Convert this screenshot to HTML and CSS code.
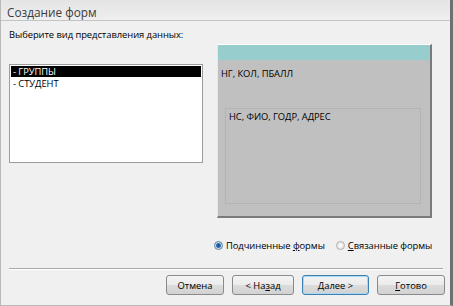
FILE: index.html
```html
<!DOCTYPE html>
<html lang="ru">
<head>
  <meta charset="UTF-8" />
  <title>Создание форм</title>
  <link rel="stylesheet" href="styles.css">
</head>
<body>
  <div class="window">
    <div class="titlebar">Создание форм</div>

    <div class="content">
      <div class="prompt">Выберите вид представления данных:</div>

      <div class="main">
        <ul class="listbox">
          <li class="selected">- ГРУППЫ</li>
          <li>- СТУДЕНТ</li>
        </ul>

        <div class="preview">
          <div class="preview-head"></div>
          <div class="preview-fields">НГ, КОЛ, ПБАЛЛ</div>
          <div class="subform">НС, ФИО, ГОДР, АДРЕС</div>
        </div>
      </div>

      <div class="options">
        <label class="radio"><span class="dot checked"></span><span>Подчиненные <u>ф</u>ормы</span></label>
        <label class="radio"><span class="dot"></span><span><u>С</u>вязанные формы</span></label>
      </div>
    </div>

    <div class="separator"></div>

    <div class="buttons">
      <button class="btn w-cancel">Отмена</button>
      <button class="btn w-back">&lt; На<u>з</u>ад</button>
      <button class="btn w-next default"><u>Д</u>алее &gt;</button>
      <button class="btn w-done"><u>Г</u>отово</button>
    </div>
  </div>
</body>
</html>
```

FILE: styles.css
```css
:root {
  --face: #f0f0f0;
  --text: #000000;
  --ui-font: "Open Sans", "DejaVu Sans", sans-serif;
}

body {
  margin: 0;
  background: #ffffff;
  font-family: var(--ui-font);
  color: var(--text);
}

.window {
  width: 453px;
  height: 306px;
  box-sizing: border-box;
  background: var(--face);
  border-left: 1px solid #b9b9b9;
  border-right: 3px solid #6f6f6f;
  border-bottom: 1px solid #b9b9b9;
  display: flex;
  flex-direction: column;
}

.titlebar {
  height: 21px;
  box-sizing: border-box;
  padding-left: 6px;
  line-height: 24px;
  font-size: 11.8px;
  color: #3c3c3c;
  background: linear-gradient(#e4e4e4, #efefef);
  border-bottom: 1px solid #c4c4c4;
}

.content {
  padding: 7px 0 0 8px;
  flex: 1;
  font-size: 9.4px;
  letter-spacing: -0.05px;
}

.prompt {
  line-height: 14px;
}

.main {
  display: flex;
  align-items: flex-start;
  gap: 14px;
  margin-top: 2px;
}

.listbox {
  list-style: none;
  margin: 20px 0 0 0;
  padding: 1px;
  width: 194px;
  height: 99px;
  box-sizing: border-box;
  background: #ffffff;
  border: 1px solid #9c9c9c;
}

.listbox li {
  line-height: 13px;
  padding-left: 2px;
}

.listbox .selected {
  background: #000000;
  color: #ffffff;
  line-height: 11px;
}

.preview {
  width: 215px;
  height: 174px;
  box-sizing: border-box;
  background: #c0c0c0;
  border-top: 1px solid #ffffff;
  border-left: 1px solid #e8e8e8;
  border-right: 2px solid #7a7a7a;
  border-bottom: 2px solid #7a7a7a;
  display: flex;
  flex-direction: column;
}

.preview-head {
  height: 15px;
  background: #98cdcd;
}

.preview-fields {
  padding: 7px 0 0 3px;
  line-height: 14px;
}

.subform {
  margin: 27px 9px 0 7px;
  height: 96px;
  box-sizing: border-box;
  border: 1px solid #b3b3b3;
  padding: 1px 3px;
  line-height: 14px;
}

.options {
  display: flex;
  gap: 11px;
  margin: 21px 0 0 205px;
}

.radio {
  display: flex;
  align-items: center;
  gap: 3px;
}

.dot {
  width: 9px;
  height: 9px;
  box-sizing: border-box;
  border-radius: 50%;
  border: 1px solid #b0b0b0;
  background: radial-gradient(#ffffff, #dcdcdc);
}

.dot.checked {
  border-color: #5a7ea0;
  background: radial-gradient(circle, #1d4f86 0, #2a6cb0 2px, #cfe0ef 3px, #e8eef4 4px);
}

.separator {
  height: 0;
  margin: 0 7px 0 8px;
  border-top: 1px solid #a8a8a8;
  border-bottom: 1px solid #ffffff;
}

.buttons {
  display: flex;
  justify-content: flex-end;
  gap: 8px;
  padding: 5px 5px 10px 0;
}

.btn {
  height: 20px;
  padding: 0;
  font-family: var(--ui-font);
  font-size: 9.4px;
  color: var(--text);
  border: 1px solid #8a8a8a;
  border-radius: 3px;
  background: linear-gradient(#f4f4f4 0, #ebebeb 50%, #dcdcdc 51%, #d2d2d2 100%);
}

.btn.default {
  border-color: #3c7fb1;
  box-shadow: inset 0 0 0 1px #a8d8f4;
}

.w-cancel { width: 58px; }
.w-back { width: 62px; }
.w-next { width: 67px; }
.w-done { width: 68px; }
```
